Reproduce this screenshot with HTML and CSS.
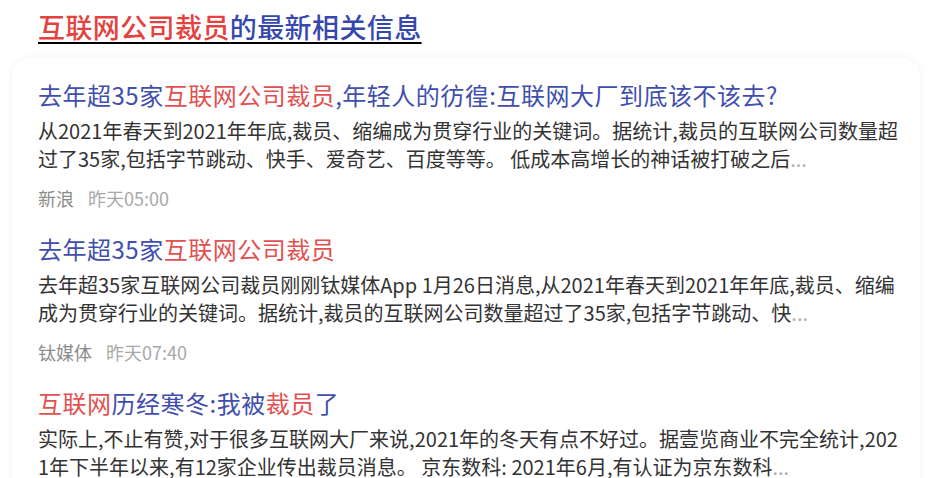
FILE: index.html
```html
<!DOCTYPE html>
<html lang="zh-CN">
<head>
<meta charset="utf-8">
<title>互联网公司裁员的最新相关信息</title>
<link rel="stylesheet" href="styles.css">
</head>
<body>
<div class="page">
  <h1 class="heading"><span class="hl">互联网公司裁员</span><span class="lk">的最新相关信息</span></h1>
  <div class="card">
    <div class="item">
      <div class="title"><span class="lk">去年超35家</span><span class="hl">互联网公司裁员</span><span class="lk">,年轻人的彷徨:互联网大厂到底该不该去?</span></div>
      <div class="snippet">
        <span class="line">从2021年春天到2021年年底,裁员、缩编成为贯穿行业的关键词。据统计,裁员的互联网公司数量超</span>
        <span class="line">过了35家,包括字节跳动、快手、爱奇艺、百度等等。 低成本高增长的神话被打破之后<span class="dots">...</span></span>
      </div>
      <div class="meta"><span class="src">新浪</span><span class="time">昨天05:00</span></div>
    </div>
    <div class="item">
      <div class="title"><span class="lk">去年超35家</span><span class="hl">互联网公司裁员</span></div>
      <div class="snippet">
        <span class="line">去年超35家互联网公司裁员刚刚钛媒体App 1月26日消息,从2021年春天到2021年年底,裁员、缩编</span>
        <span class="line">成为贯穿行业的关键词。据统计,裁员的互联网公司数量超过了35家,包括字节跳动、快<span class="dots">...</span></span>
      </div>
      <div class="meta"><span class="src">钛媒体</span><span class="time">昨天07:40</span></div>
    </div>
    <div class="item">
      <div class="title"><span class="hl">互联网</span><span class="lk">历经寒冬:我被</span><span class="hl">裁员</span><span class="lk">了</span></div>
      <div class="snippet">
        <span class="line">实际上,不止有赞,对于很多互联网大厂来说,2021年的冬天有点不好过。据壹览商业不完全统计,202</span>
        <span class="line">1年下半年以来,有12家企业传出裁员消息。 京东数科: 2021年6月,有认证为京东数科<span class="dots">...</span></span>
      </div>
    </div>
  </div>
</div>
</body>
</html>
```

FILE: styles.css
```css
html, body {
  margin: 0;
  padding: 0;
  background: #ffffff;
}
body {
  width: 947px;
  height: 478px;
  overflow: hidden;
  font-family: "Noto Sans CJK SC", "Noto Sans", "Liberation Sans", sans-serif;
}
.page {
  padding: 9px 0 0 12px;
}
.heading {
  margin: 0 0 13px 26px;
  font-size: 27px;
  line-height: 36px;
  font-weight: 500;
  letter-spacing: 0.4px;
  text-decoration: underline;
  text-decoration-thickness: 2px;
  text-underline-offset: 4px;
  white-space: nowrap;
}
.heading .hl { color: #e4423e; }
.heading .lk { color: #3548ad; }
.card {
  width: 908px;
  box-sizing: border-box;
  padding: 20px 26px 0 26px;
  border-radius: 18px;
  background: #ffffff;
  box-shadow: 0 0 8px rgba(0, 0, 0, 0.06);
  height: 440px;
}
.item + .item {
  margin-top: 21px;
}
.title {
  font-size: 24px;
  line-height: 34px;
  letter-spacing: 0.5px;
  white-space: nowrap;
}
.title .lk { color: #3f4fad; }
.title .hl { color: #e2514f; }
.snippet {
  margin-top: 5px;
  font-size: 20px;
  line-height: 28px;
  color: #333333;
}
.snippet .line {
  display: block;
  white-space: nowrap;
}
.snippet .dots {
  color: #b0b0b0;
}
.meta {
  margin-top: 12px;
  font-size: 18px;
  line-height: 26px;
  display: flex;
  gap: 14px;
}
.meta .src { color: #8c8c8c; }
.meta .time { color: #a8a8a8; }
```
